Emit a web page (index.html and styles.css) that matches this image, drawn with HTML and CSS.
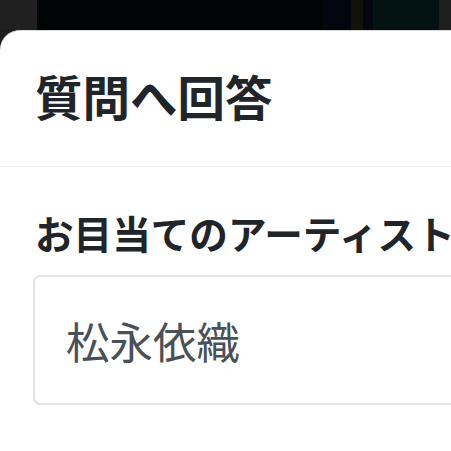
FILE: index.html
```html
<!DOCTYPE html>
<html lang="ja">
<head>
<meta charset="utf-8">
<link rel="stylesheet" href="styles.css">
</head>
<body>
<div class="backdrop">
  <div class="bd bd-gray"></div>
  <div class="bd bd-black"></div>
  <div class="bd bd-navy"></div>
  <div class="bd bd-olive"></div>
  <div class="bd bd-navy2"></div>
  <div class="bd bd-teal"></div>
  <div class="bd bd-gray2"></div>
</div>
<div class="sheet">
  <div class="sheet-header">
    <h5 class="sheet-title">質問へ回答</h5>
  </div>
  <div class="sheet-body">
    <label class="field-label">お目当てのアーティスト</label>
    <div class="field-input">松永依織</div>
  </div>
</div>
</body>
</html>
```
FILE: styles.css
```css
html, body {
  margin: 0;
  padding: 0;
  width: 451px;
  height: 451px;
  overflow: hidden;
  background: #1e1e1e;
  font-family: "Noto Sans CJK JP", "Noto Sans", sans-serif;
}
.backdrop {
  display: flex;
  height: 30px;
}
.bd { height: 100%; }
.bd-gray { width: 37px; background: #202020; }
.bd-black { flex: 1; background: #010404; }
.bd-navy { width: 28px; background: #02060f; }
.bd-olive { width: 12px; background: #12120a; }
.bd-navy2 { width: 10px; background: #03060f; }
.bd-teal { width: 66px; background: #031212; }
.bd-gray2 { width: 12px; background: #1e1e1e; }
.sheet {
  background: #fff;
  border-top-left-radius: 20px;
  border-top: 1px solid #d8d8d8;
  height: 421px;
  box-sizing: border-box;
}
.sheet-header {
  padding: 37px 0 42px 35px;
  border-bottom: 1px solid #ececec;
}
.sheet-title {
  margin: 0;
  font-size: 47.5px;
  line-height: 56px;
  font-weight: 700;
  color: #212529;
}
.sheet-body {
  padding: 42px 0 0 33px;
}
.field-label {
  display: block;
  font-size: 38.6px;
  line-height: 46px;
  font-weight: 700;
  color: #212529;
  white-space: nowrap;
  margin-left: 2px;
}
.field-input {
  margin-top: 20px;
  height: 130px;
  box-sizing: border-box;
  border: 2px solid #e2e3e5;
  border-right: none;
  border-radius: 7px 0 0 7px;
  padding-left: 31px;
  display: flex;
  align-items: center;
  font-size: 43.5px;
  color: #495057;
  white-space: nowrap;
}
```
